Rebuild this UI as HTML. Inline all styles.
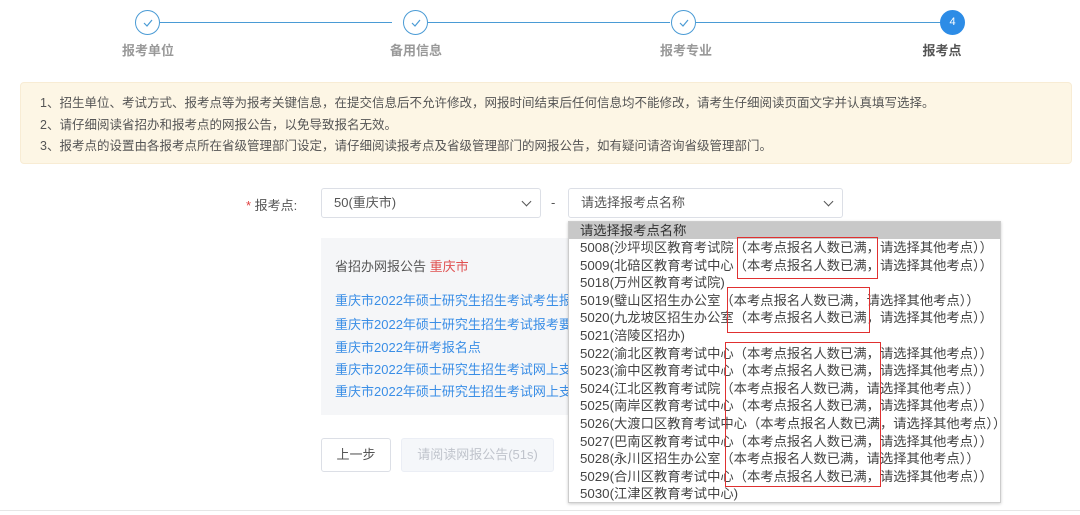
<!DOCTYPE html>
<html><head><meta charset="utf-8"><style>
*{margin:0;padding:0;box-sizing:border-box}
body{width:1080px;height:515px;background:#fff;position:relative;overflow:hidden;font-family:"Liberation Sans","Noto Sans CJK SC",sans-serif;color:#555;font-size:13px}
.a{position:absolute;white-space:nowrap}
.c{position:absolute;width:25px;height:25px;border-radius:50%;border:1px solid #4a9bd5;background:#fff;top:10px;color:#4a9bd5;font-size:11px;text-align:center;line-height:23px}
.c svg{position:absolute;left:7px;top:8px}
.ln{position:absolute;top:22px;height:1px;background:#4a9bd5}
.lb{position:absolute;top:40px;font-size:13px;font-weight:bold;color:#999;width:100px;text-align:center}
.sel{position:absolute;border:1px solid #dcdfe6;border-radius:3px;height:30px;top:188px;background:#fff;padding-left:12px;line-height:28px;color:#555}
.sel:after{content:"";position:absolute;right:10px;top:9px;width:6px;height:6px;border-right:1.3px solid #555;border-bottom:1.3px solid #555;transform:rotate(45deg)}
.lk{position:absolute;left:335px;color:#3a8ee6;font-size:13px}
.dd{position:absolute;left:568px;top:221px;width:433px;height:282px;background:#fff;border:1px solid #ccc;box-shadow:0 1px 3px rgba(0,0,0,.2);font-size:13.3px;color:#444}
.dd div{height:17.6px;line-height:17.6px;padding-left:11px;white-space:nowrap}
.dd div.h{height:17px;line-height:17px}
.rb{position:absolute;border:1.5px solid #e03030}
</style></head><body>
<div class="ln" style="left:160px;width:232px"></div>
<div class="ln" style="left:428px;width:242px"></div>
<div class="ln" style="left:696px;width:244px"></div>
<div class="c" style="left:135px"><svg width="10" height="8" viewBox="0 0 10 8"><path d="M1 4l3 3 5-6" fill="none" stroke="#4a9bd5" stroke-width="1.2"/></svg></div>
<div class="c" style="left:403px"><svg width="10" height="8" viewBox="0 0 10 8"><path d="M1 4l3 3 5-6" fill="none" stroke="#4a9bd5" stroke-width="1.2"/></svg></div>
<div class="c" style="left:671px"><svg width="10" height="8" viewBox="0 0 10 8"><path d="M1 4l3 3 5-6" fill="none" stroke="#4a9bd5" stroke-width="1.2"/></svg></div>
<div class="c" style="left:940px;background:#2d8ce6;border-color:#2d8ce6;color:#fff">4</div>
<div class="lb" style="left:98px">报考单位</div>
<div class="lb" style="left:366px">备用信息</div>
<div class="lb" style="left:636px">报考专业</div>
<div class="lb" style="left:892px;color:#555">报考点</div>
<div class="a" style="left:20px;top:82px;width:1052px;height:82px;background:#fdf6e5;border:1px solid #f8ecd4;border-radius:4px"></div>
<div class="a" style="left:40px;top:93px;line-height:21.5px;font-size:12.5px;color:#555">1、招生单位、考试方式、报考点等为报考关键信息，在提交信息后不允许修改，网报时间结束后任何信息均不能修改，请考生仔细阅读页面文字并认真填写选择。<br>2、请仔细阅读省招办和报考点的网报公告，以免导致报名无效。<br>3、报考点的设置由各报考点所在省级管理部门设定，请仔细阅读报考点及省级管理部门的网报公告，如有疑问请咨询省级管理部门。</div>
<div class="a" style="left:246px;top:195px"><span style="color:#e04040">* </span>报考点:</div>
<div class="sel" style="left:321px;width:220px">50(重庆市)</div>
<div class="a" style="left:551px;top:195px">-</div>
<div class="sel" style="left:568px;width:275px">请选择报考点名称</div>
<div class="a" style="left:321px;top:238px;width:270px;height:177px;background:#f5f6f8"></div>
<div class="a" style="left:335px;top:256px">省招办网报公告 <span style="color:#e05050">重庆市</span></div>
<div class="lk" style="top:290px">重庆市2022年硕士研究生招生考试考生报</div>
<div class="lk" style="top:314px">重庆市2022年硕士研究生招生考试报考要</div>
<div class="lk" style="top:337px">重庆市2022年研考报名点</div>
<div class="lk" style="top:359px">重庆市2022年硕士研究生招生考试网上支</div>
<div class="lk" style="top:381px">重庆市2022年硕士研究生招生考试网上支</div>
<div class="a" style="left:321px;top:438px;width:70px;height:34px;border:1px solid #dcdfe6;border-radius:3px;text-align:center;line-height:32px;color:#555">上一步</div>
<div class="a" style="left:401px;top:438px;width:153px;height:34px;border:1px solid #ebeef5;background:#f5f7fa;border-radius:3px;text-align:center;line-height:32px;color:#c0c4cc">请阅读网报公告(51s)</div>
<div class="a" style="left:0;top:510px;width:1080px;height:1px;background:#e6e6e6"></div>
<div class="dd">
<div class="h" style="background:#c8c8c8;color:#333">请选择报考点名称</div>
<div>5008(沙坪坝区教育考试院（本考点报名人数已满，请选择其他考点））</div>
<div>5009(北碚区教育考试中心（本考点报名人数已满，请选择其他考点））</div>
<div>5018(万州区教育考试院)</div>
<div>5019(璧山区招生办公室（本考点报名人数已满，请选择其他考点））</div>
<div>5020(九龙坡区招生办公室（本考点报名人数已满，请选择其他考点））</div>
<div>5021(涪陵区招办)</div>
<div>5022(渝北区教育考试中心（本考点报名人数已满，请选择其他考点））</div>
<div>5023(渝中区教育考试中心（本考点报名人数已满，请选择其他考点））</div>
<div>5024(江北区教育考试院（本考点报名人数已满，请选择其他考点））</div>
<div>5025(南岸区教育考试中心（本考点报名人数已满，请选择其他考点））</div>
<div>5026(大渡口区教育考试中心（本考点报名人数已满，请选择其他考点））</div>
<div>5027(巴南区教育考试中心（本考点报名人数已满，请选择其他考点））</div>
<div>5028(永川区招生办公室（本考点报名人数已满，请选择其他考点））</div>
<div>5029(合川区教育考试中心（本考点报名人数已满，请选择其他考点））</div>
<div>5030(江津区教育考试中心)</div>
</div>
<div class="rb" style="left:737px;top:237px;width:141px;height:42px"></div>
<div class="rb" style="left:727px;top:287px;width:143px;height:46px"></div>
<div class="rb" style="left:725px;top:342px;width:156px;height:145px"></div>
</body></html>
